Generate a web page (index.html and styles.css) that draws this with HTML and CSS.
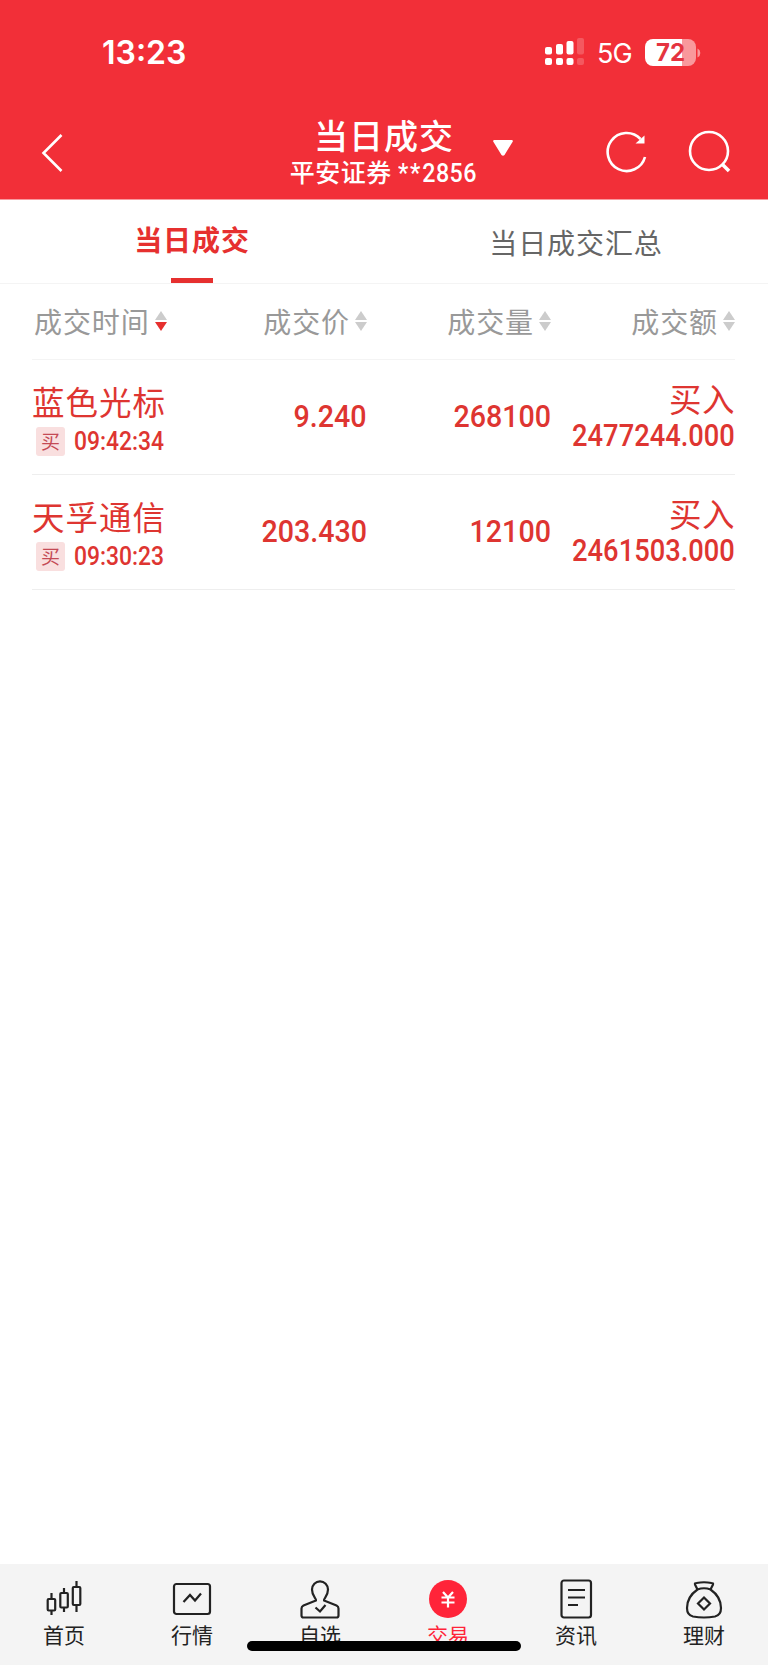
FILE: index.html
```html
<!DOCTYPE html>
<html lang="zh-CN">
  <head>
    <meta charset="UTF-8" />
    <meta name="viewport" content="width=device-width, initial-scale=1.0" />
    <title>当日成交</title>
    <link rel="stylesheet" href="styles.css">
  </head>
  <body>
    <header class="header">
      <!-- Status bar -->
      <div class="status">
        <span class="clock">13:23</span>
        <div class="status-right">
          <svg class="signal" width="40" height="28" viewBox="0 0 40 28" fill="#fff">
            <rect x="0" y="9" width="7" height="7.500" rx="2" />
            <rect x="0" y="20" width="7" height="7" rx="2" />
            <rect x="11" y="6" width="7" height="10.500" rx="2" />
            <rect x="11" y="20" width="7" height="7" rx="2" />
            <rect x="21.500" y="3" width="7" height="13.500" rx="2" />
            <rect x="21.500" y="20" width="7" height="7" rx="2" />
            <rect x="32" y="0" width="7" height="16.500" rx="2" opacity="0.200" />
            <rect x="32" y="20" width="7" height="7" rx="2" opacity="0.200" />
          </svg>
          <span class="network">5G</span>
          <div class="battery"><span>72</span></div>
          <svg width="4" height="10" viewBox="0 0 4 10"><path d="M0.500 0.500a5 5 0 0 1 0 9z" fill="#f9989c" /></svg>
        </div>
      </div>

      <!-- Title bar -->
      <div class="navbar">
        <svg class="back" width="24" height="40" viewBox="0 0 24 40" fill="none" stroke="#fff" stroke-width="2.600">
          <path d="M21.500 2L3.500 20l18 18" />
        </svg>
        <div class="title">
          <h1>当日成交</h1>
          <p>平安证券 <span class="num"><span class="mask">**</span>2856</span></p>
        </div>
        <svg class="caret" width="22" height="18" viewBox="0 0 22 18">
          <path d="M2 1h18q1.500 0.500 0.500 2l-8 13q-1.500 1.500-3 0l-8-13q-1-1.500 0.500-2z" fill="#fff" />
        </svg>
        <svg class="refresh" width="42" height="42" viewBox="0 0 42 42" fill="none" stroke="#fff" stroke-width="2.600">
          <path d="M39 26A19 19 0 1 1 34.500 8" />
          <path d="M29.500 12.500L38.500 4.500v8z" fill="#fff" stroke="none" />
        </svg>
        <svg class="search" width="44" height="44" viewBox="0 0 44 44" fill="none" stroke="#fff" stroke-width="2.600">
          <circle cx="21" cy="21" r="19" />
          <path d="M34 34l7 7" stroke-width="3.500" />
        </svg>
      </div>
    </header>

    <!-- Tabs -->
    <nav class="tabs">
      <div class="tab active">当日成交</div>
      <div class="tab">当日成交汇总</div>
    </nav>

    <!-- Deal list -->
    <main class="list">
      <div class="row head">
        <div class="th first">成交时间<span class="sort down"></span></div>
        <div class="th">成交价<span class="sort"></span></div>
        <div class="th">成交量<span class="sort"></span></div>
        <div class="th">成交额<span class="sort"></span></div>
      </div>

      <div class="row deal">
        <div class="stock">
          <div class="name">蓝色光标</div>
          <div class="time"><span class="badge">买</span><span class="num">09:42:34</span></div>
        </div>
        <div class="value"><span class="num">9.240</span></div>
        <div class="value"><span class="num">268100</span></div>
        <div class="amount">
          <div class="side">买入</div>
          <span class="num">2477244.000</span>
        </div>
      </div>

      <div class="row deal">
        <div class="stock">
          <div class="name">天孚通信</div>
          <div class="time"><span class="badge">买</span><span class="num">09:30:23</span></div>
        </div>
        <div class="value"><span class="num">203.430</span></div>
        <div class="value"><span class="num">12100</span></div>
        <div class="amount">
          <div class="side">买入</div>
          <span class="num">2461503.000</span>
        </div>
      </div>
    </main>

    <!-- Bottom navigation -->
    <footer class="tabbar">
      <div class="item">
        <svg width="40" height="40" viewBox="0 0 40 40">
          <path d="M7.500 14v6M7.500 31.500v4.500M20 9v5M20 28.500v4.500M32.500 2v6M32.500 26v7" />
          <rect x="3.700" y="20" width="7.500" height="11.500" rx="1" />
          <rect x="16.300" y="14" width="7.500" height="14.500" rx="1" />
          <rect x="28.800" y="8" width="7.500" height="18" rx="1" />
        </svg>
        <span>首页</span>
      </div>
      <div class="item">
        <svg width="40" height="40" viewBox="0 0 40 40">
          <rect x="2" y="5" width="36" height="30" rx="2.500" />
          <path d="M11.500 23l6.500-7 5 5.500 6-7" />
        </svg>
        <span>行情</span>
      </div>
      <div class="item">
        <svg width="40" height="40" viewBox="0 0 40 40">
          <path d="M16 21.500c0.500-2-4-4-4-11a8 8.200 0 0 1 16 0c0 7-4.500 9-4 11l12.500 5q2 1 2 3v7q0 2-2 2h-33q-2 0-2-2v-7q0-2 2-3L16 21.500z" />
          <path d="M15.500 28.500l4.500 4 5.500-6.500" />
        </svg>
        <span>自选</span>
      </div>
      <div class="item active">
        <svg width="40" height="40" viewBox="0 0 40 40">
          <circle cx="20" cy="20" r="19" fill="#ff2439" stroke="none" />
          <path d="M15 13l5 5.500 5-5.500M13.500 18.500h13M13.500 23.500h13M20 18.500v10" stroke="#fff" />
        </svg>
        <span>交易</span>
      </div>
      <div class="item">
        <svg width="40" height="40" viewBox="0 0 40 40">
          <rect x="5.500" y="1.500" width="29.500" height="37" rx="2.500" />
          <path d="M12 11h17M12 18.500h17M12 26h10" />
        </svg>
        <span>资讯</span>
      </div>
      <div class="item">
        <svg width="40" height="40" viewBox="0 0 40 40">
          <path d="M13.500 10.500L11 5.500q-0.500-1.500 1.500-1.500q7.500-1.500 15 0q2 0 1.500 1.500l-2.500 5" />
          <path d="M13.500 10.500q6.500-2.500 13 0C33 15 37 22 37 29q0 7-6 8.500-11 2-22 0-6-1.500-6-8.500c0-7 4-14 10.500-18.500z" />
          <path d="M20 18.500l6 6-6 6-6-6z" />
        </svg>
        <span>理财</span>
      </div>
      <div class="home-indicator"></div>
    </footer>
  </body>
</html>
```
FILE: styles.css
```css
* {
  box-sizing: border-box;
}
body {
  margin: 0;
  min-height: 1665px;
  display: flex;
  flex-direction: column;
  font-family: "Noto Sans CJK SC", sans-serif;
  background-color: #fff;
}
h1,
p {
  margin: 0;
}
svg {
  display: block;
  flex: none;
}

/* narrow digits */
.num {
  display: inline-block;
  font-family: Roboto, "Noto Sans CJK SC", sans-serif;
  font-weight: 500;
  transform: scaleX(0.895);
  transform-origin: right center;
  white-space: nowrap;
}

.header {
  height: 200px;
  background-color: #f22f38;
  border-bottom: 1px solid #f89a9e;
  color: #fff;
}
.status {
  height: 105px;
  padding: 0 67px 0 102px;
  display: flex;
  justify-content: space-between;
  align-items: center;
  font-family: Inter, sans-serif;
}
.clock {
  font-size: 32px;
  font-weight: 600;
}
.status-right {
  display: flex;
  align-items: center;
}
.signal {
  margin-top: -1px;
}
.network {
  margin: 1px 12px 0 12px;
  width: 36px;
  font-size: 27px;
  letter-spacing: -1px;
}
.battery {
  width: 51px;
  height: 27px;
  margin: -1px 1px 0 0;
  border-radius: 8px;
  background: linear-gradient(to right, #fff 73%, #f9989c 73%);
  color: #e53440;
  font-size: 24px;
  font-weight: 700;
  line-height: 27px;
  text-align: center;
}
.navbar {
  height: 93px;
  padding-left: 40px;
  display: flex;
  align-items: flex-start;
}
.back {
  margin-top: 28px;
}
.title {
  width: 200px;
  margin-left: 220px;
  padding-top: 6px;
  text-align: center;
}
.title h1 {
  font-size: 34px;
  font-weight: 500;
  line-height: 48px;
  letter-spacing: 1px;
}
.title p {
  margin-top: -1px;
  font-size: 25px;
  font-weight: 500;
  line-height: 27px;
  letter-spacing: 0.500px;
  white-space: nowrap;
}
.title .num {
  font-size: 26px;
  letter-spacing: 0.500px;
  transform-origin: left center;
  margin-right: -8px;
}
.title .mask {
  letter-spacing: 2px;
}
.caret {
  margin: 34px 0 0 8px;
}
.refresh {
  margin: 26px 0 0 92px;
}
.search {
  margin: 25px 0 0 40px;
}

.tabs {
  height: 84px;
  display: flex;
  border-bottom: 1px solid #f4f4f4;
}
.tab {
  flex: 1;
  padding-top: 2px;
  text-align: center;
  font-size: 28px;
  line-height: 80px;
  letter-spacing: 0.900px;
  color: #666;
}
.tab.active {
  position: relative;
  padding-top: 0;
  font-weight: 700;
  line-height: 79px;
  color: #e6302f;
}
.tab.active::after {
  content: "";
  position: absolute;
  left: 171px;
  bottom: 0;
  width: 42px;
  height: 5px;
  background-color: #e6302f;
}

.list {
  flex: 1;
  padding: 0 33px 0 32px;
}
.row {
  display: grid;
  grid-template-columns: 164px 171px 184px 184px;
  height: 115px;
  border-bottom: 1px solid #eee;
}
.row.head {
  height: 76px;
  border-color: #f4f4f4;
}
.th {
  display: flex;
  justify-content: flex-end;
  align-items: center;
  padding-bottom: 1px;
  font-size: 28px;
  letter-spacing: 0.900px;
  color: #999;
  white-space: nowrap;
}
.th.first {
  justify-content: flex-start;
  padding-left: 2px;
}
.sort {
  width: 12px;
  height: 20px;
  margin-left: 5px;
  display: flex;
  flex-direction: column;
  justify-content: space-between;
}
.sort::before,
.sort::after {
  content: "";
  border: 6px solid transparent;
}
.sort::before {
  border-top: 0;
  border-bottom: 9px solid #ccc;
}
.sort::after {
  border-bottom: 0;
  border-top: 9px solid #ccc;
}
.sort.down::after {
  border-top-color: #e6302f;
}

.deal {
  color: #de3531;
}
.name {
  margin-top: 19px;
  font-size: 32.500px;
  line-height: 44px;
  letter-spacing: 1px;
  white-space: nowrap;
}
.time {
  display: flex;
  align-items: center;
  padding: 4px 0 0 4px;
}
.badge {
  width: 29px;
  height: 29px;
  margin-right: 9px;
  border-radius: 3px;
  background-color: #f9dfdf;
  color: #c44a55;
  font-size: 19px;
  line-height: 28px;
  text-align: center;
}
.time .num {
  font-size: 26px;
  line-height: 28px;
  margin-top: -2px;
  transform: scaleX(0.880);
  transform-origin: left center;
}
.value {
  text-align: right;
  font-size: 32px;
  line-height: 107px;
}
.amount {
  display: flex;
  flex-direction: column;
  align-items: flex-end;
  padding-top: 16px;
}
.side {
  font-size: 32.500px;
  line-height: 44px;
  letter-spacing: 0.500px;
}
.amount .num {
  font-size: 30.500px;
  line-height: 32px;
}

.tabbar {
  position: relative;
  height: 101px;
  display: flex;
  background-color: #f4f4f4;
}
.item {
  flex: 1;
  display: flex;
  flex-direction: column;
  align-items: center;
  padding-top: 15px;
  font-size: 21px;
  line-height: 31px;
  color: #222;
}
.item svg {
  fill: none;
  stroke: #222;
  stroke-width: 2.200;
}
.item.active {
  color: #ff2439;
}
.home-indicator {
  position: absolute;
  left: 247px;
  bottom: 14px;
  width: 274px;
  height: 10px;
  border-radius: 5px;
  background-color: #000;
}
```
